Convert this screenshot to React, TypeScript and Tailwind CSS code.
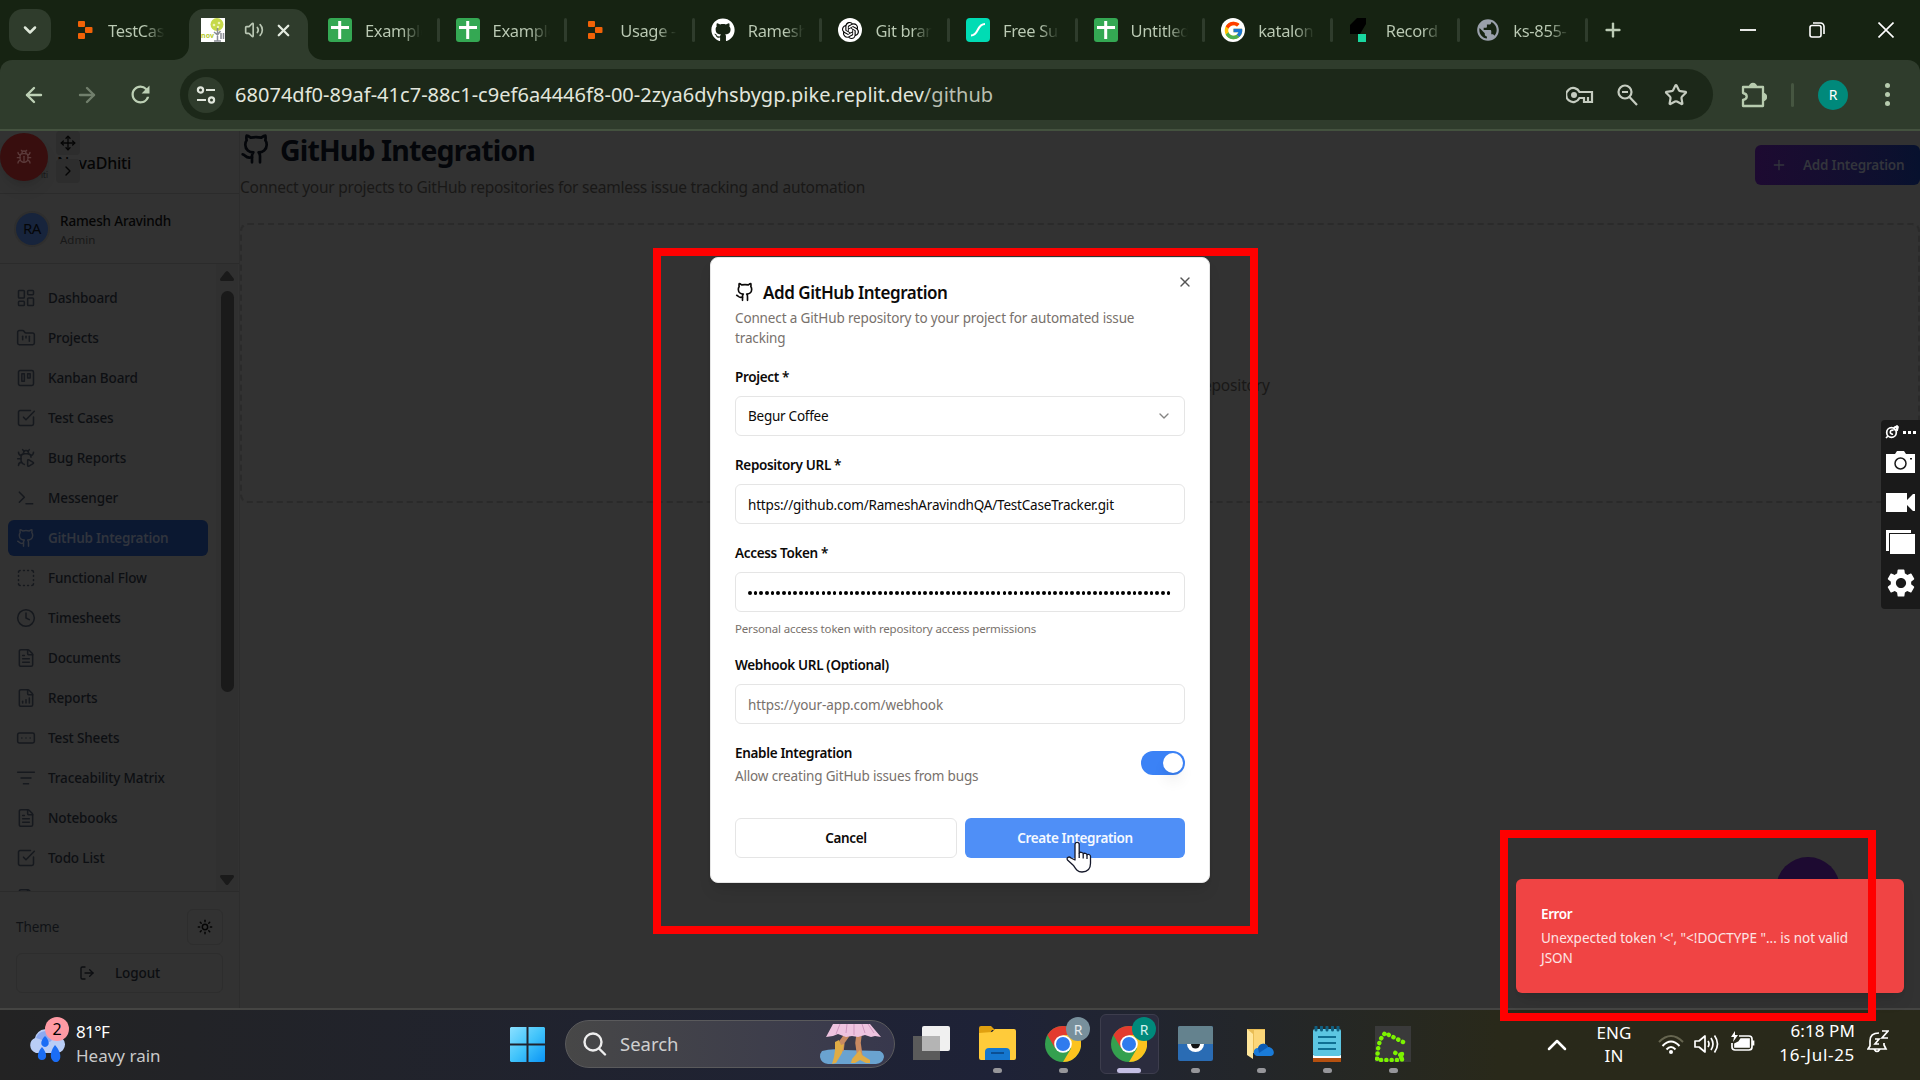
import React from "react";
import {
  ArrowLeft, ArrowRight, BugPlay, Bug, ChevronDown, ChevronRight, ChevronUp, Clock, FileText,
  FolderKanban, Github, LayoutDashboard, ListFilter, LogOut, Move, Plus, RectangleEllipsis, SquareCheckBig,
  SquareDashed, Star, Sun, Terminal, Trello, Volume2, X, FileChartColumnIncreasing,
} from "lucide-react";
import { FaGithub } from "react-icons/fa";
import { FcGoogle } from "react-icons/fc";
import { SiOpenai } from "react-icons/si";
import { MdRefresh, MdSettings, MdPublic } from "react-icons/md";

const ReplitIcon = () => (
  <svg viewBox="0 0 24 24" className="size-6 shrink-0" fill="#f26207">
    <rect x="5" y="3" width="7" height="6" rx="1" />
    <rect x="12" y="9" width="7.5" height="6" rx="1" />
    <rect x="5" y="15" width="7" height="6" rx="1" />
  </svg>
);
const SheetIcon = () => (
  <svg viewBox="0 0 24 24" className="size-6 shrink-0">
    <rect width="24" height="24" rx="3" fill="#34a853" />
    <path d="M11.7 3v18M3 9.500h18" stroke="#fff" strokeWidth="3" />
  </svg>
);
const GithubFav = () => <FaGithub className="size-6 shrink-0 text-white" />;
const GptFav = () => (
  <span className="flex size-6 shrink-0 items-center justify-center rounded-full bg-white">
    <SiOpenai className="size-[17px] text-black" />
  </span>
);
const FreeFav = () => (
  <svg viewBox="0 0 24 24" className="size-6 shrink-0">
    <rect width="24" height="24" rx="4" fill="#00dcb4" />
    <path d="M5 17.500c8 0 5.500-11.500 14-11.500" stroke="#fff" strokeWidth="2.200" fill="none" />
  </svg>
);
const GoogleFav = () => (
  <span className="flex size-6 shrink-0 items-center justify-center rounded-full bg-white">
    <FcGoogle className="size-[21px]" />
  </span>
);
const KatalonFav = () => (
  <svg viewBox="0 0 24 24" className="size-6 shrink-0">
    <path d="M8 0h9v6l-6 10H1V7z" fill="#000" />
    <path d="M9 16h8v8H9z" fill="#19d8a0" />
  </svg>
);
const GlobeFav = () => <MdPublic className="size-[26px] shrink-0 text-[#9aa0ab]" />;

const tabs = [
  { label: "Example", icon: SheetIcon },
  { label: "Example", icon: SheetIcon },
  { label: "Usage -", icon: ReplitIcon },
  { label: "Ramesh", icon: GithubFav },
  { label: "Git bran", icon: GptFav },
  { label: "Free Su", icon: FreeFav },
  { label: "Untitled", icon: SheetIcon },
  { label: "katalon", icon: GoogleFav },
  { label: "Record", icon: KatalonFav },
  { label: "ks-855-", icon: GlobeFav },
];

const TabLabel = ({ children }: { children: React.ReactNode }) => (
  <span className="mt-[2px] w-[57px] overflow-hidden bg-linear-to-r from-[#bccbb5] from-65% to-[#162312] bg-clip-text text-[16.500px] leading-6 tracking-[-0.35px] whitespace-nowrap text-transparent">
    {children}
  </span>
);

function TabStrip() {
  return (
    <div className="flex h-[60px] bg-[#162312]">
      <div className="mt-[9px] ml-[9px] flex size-[42px] shrink-0 items-center justify-center rounded-[14px] bg-[#2f3c2c]">
        <ChevronDown className="size-5 text-[#dfe8da]" strokeWidth={3} />
      </div>
      <div className="flex w-[138px] shrink-0 items-center gap-[11px] pl-[22px]">
        <ReplitIcon />
        <TabLabel>TestCase</TabLabel>
      </div>
      <div className="relative mt-[9px] flex w-[119px] shrink-0 items-center rounded-t-[15px] bg-[#2f3c2c] pb-[9px] pl-3">
        <svg className="absolute bottom-0 -left-[15px] size-[15px]" viewBox="0 0 15 15"><path d="M15 0v15H0A15 15 0 0 0 15 0" fill="#2f3c2c" /></svg>
        <svg className="absolute -right-[15px] bottom-0 size-[15px]" viewBox="0 0 15 15"><path d="M0 0v15h15A15 15 0 0 1 0 0" fill="#2f3c2c" /></svg>
        <svg viewBox="0 0 24 24" className="size-6">
          <rect width="24" height="24" fill="#fff" />
          <circle cx="16" cy="6.500" r="6.500" fill="#c6d94a" />
          <circle cx="13" cy="7" r="1.300" fill="#eef3b8" /><circle cx="18" cy="5" r="1.300" fill="#eef3b8" /><circle cx="17" cy="9" r="1.200" fill="#eef3b8" />
          <path d="M16.500 10v13M13 14l3.500 3 3-4M13 23h7M20 15v6M22.500 15v6" stroke="#8a8d95" strokeWidth="1.500" fill="none" />
          <text x="0" y="20" fontSize="7" fontWeight="700" fill="#b6cc2e" fontFamily="Noto Sans" textLength="13">nov</text>
        </svg>
        <Volume2 className="ml-[19px] size-5 text-[#b9c6b3]" strokeWidth={2} />
        <X className="ml-[10px] size-[19px] text-[#e4ece0]" strokeWidth={2.800} />
      </div>
      <div className="flex pl-1">
        {tabs.map(({ label, icon: Icon }, i) => (
          <div key={i} className="flex w-[127.600px] shrink-0 items-center pl-4">
            <span className="mr-[13px] flex w-6 justify-center"><Icon /></span>
            <TabLabel>{label}</TabLabel>
            <span className="ml-auto h-6 w-[3px] rounded bg-[#2f3c2c]" />
          </div>
        ))}
      </div>
      <div className="flex flex-1 items-center">
        <Plus className="ml-[14px] size-[22px] text-[#bccbb5]" strokeWidth={2.600} />
        <svg viewBox="0 0 16 16" className="ml-[116px] size-4" stroke="#fff" strokeWidth="1.800"><path d="M0 8h16" /></svg>
        <svg viewBox="0 0 16 16" className="ml-[53px] size-4 overflow-visible" stroke="#fff" strokeWidth="1.600" fill="none">
          <rect x="1" y="3.500" width="11" height="11.500" rx="2" /><path d="M4 1h7.500A3.500 3.500 0 0 1 15 4.500V12" />
        </svg>
        <svg viewBox="0 0 16 16" className="ml-[53px] size-4" stroke="#fff" strokeWidth="1.600"><path d="M.5.500l15 15M15.500.500l-15 15" /></svg>
      </div>
    </div>
  );
}

function Toolbar() {
  return (
    <div className="bg-[#162312]">
      <div className="flex h-[71px] items-center rounded-t-xl border-b-2 border-[#44523f] bg-[#2f3c2c]">
        <ArrowLeft className="ml-[22px] size-6 text-[#bdd0b5]" strokeWidth={2.400} />
        <ArrowRight className="ml-[29px] size-6 text-[#717f6c]" strokeWidth={2.400} />
        <MdRefresh className="ml-[28px] size-[27px] text-[#bdd0b5]" />
        <div className="ml-[26px] flex h-[51px] w-[1533px] items-center rounded-full bg-[#1c2819]">
          <span className="ml-2 flex size-9 items-center justify-center rounded-full bg-[#2f3c2c]">
            <svg viewBox="0 0 20 20" className="size-5" fill="none" stroke="#e0e6dc" strokeWidth="2.200">
              <circle cx="4.500" cy="5" r="2.600" /><path d="M10 5h9M1 15h9" /><circle cx="15.500" cy="15" r="2.600" />
            </svg>
          </span>
          <span className="ml-[11px] text-[20px] tracking-[0.030px] whitespace-nowrap text-[#e2e6dd]">
            68074df0-89af-41c7-88c1-c9ef6a4446f8-00-2zya6dyhsbygp.pike.replit.dev<span className="text-[#b9bfb1]">/github</span>
          </span>
          <div className="mr-[25px] ml-auto flex items-center">
            <svg viewBox="0 0 28 20" className="h-5 w-7" fill="none" stroke="#c5ccc0" strokeWidth="2.200">
              <path d="M13.500 7A7 7 0 1 0 13.500 13H18v4h8V7z" /><circle cx="8" cy="10" r="3" fill="#c5ccc0" stroke="none" /><path d="M22 12v5" />
            </svg>
            <svg viewBox="0 0 24 24" className="ml-[21px] size-6" fill="none" stroke="#c5ccc0" strokeWidth="2.200">
              <circle cx="10" cy="9" r="6.500" /><path d="M14.500 14l7.500 8M7 9h6" />
            </svg>
            <Star className="ml-[25px] size-6 text-[#c5ccc0]" strokeWidth={2.200} strokeLinejoin="miter" />
          </div>
        </div>
        <svg viewBox="0 0 26 26" className="ml-[28px] size-[26px]" fill="none" stroke="#b7cbae" strokeWidth="2.300">
          <path d="M2 5h20v19H2v-6c5-1 5-6 0-7z" strokeLinejoin="round" /><path d="M9 5a3 3 0 0 1 6 0M22 12a3 3 0 0 1 0 6" fill="#b7cbae" />
        </svg>
        <span className="ml-[24px] h-6 w-[3px] rounded bg-[#465641]" />
        <span className="ml-[24px] flex size-[30px] items-center justify-center rounded-full bg-[#00897b] text-[14px] text-white">R</span>
        <span className="ml-[37px] flex flex-col gap-1">
          {[0, 1, 2].map((i) => <span key={i} className="size-[5px] rounded-full bg-[#b7cbae]" />)}
        </span>
      </div>
    </div>
  );
}

const nav = [
  ["Dashboard", LayoutDashboard], ["Projects", FolderKanban], ["Kanban Board", Trello], ["Test Cases", SquareCheckBig],
  ["Bug Reports", BugPlay], ["Messenger", Terminal], ["GitHub Integration", Github], ["Functional Flow", SquareDashed],
  ["Timesheets", Clock], ["Documents", FileText], ["Reports", FileChartColumnIncreasing], ["Test Sheets", RectangleEllipsis],
  ["Traceability Matrix", ListFilter], ["Notebooks", FileText], ["Todo List", SquareCheckBig], ["", FileText],
] as const;

function Sidebar() {
  return (
    <aside className="flex w-60 shrink-0 flex-col border-r border-[#2d2d2d]">
      <div className="relative h-[63px] border-b border-[#2b2b2b]">
        <div className="flex h-full items-center pt-px pl-[57px] text-[16px] font-medium tracking-[-0.2px] text-[#050505]">NovaDhiti</div>
        <span className="absolute top-[38px] left-[41px] text-[8px] text-[#191919]">iti</span>
        <span className="absolute top-[2px] left-0 flex size-12 items-center justify-center rounded-full bg-[#380e0e] shadow-lg">
          <Bug className="size-4 text-[#5b3a3a]" />
        </span>
        <span className="absolute top-0 left-14 flex size-6 items-center justify-center rounded bg-[#2d2d2d]"><Move className="size-4 text-[#050505]" /></span>
        <span className="absolute top-7 left-14 flex size-6 items-center justify-center rounded bg-[#2d2d2d]"><ChevronRight className="size-4 text-[#050505]" /></span>
      </div>
      <div className="flex h-[70px] items-center gap-3 border-b border-[#2b2b2b] pl-4">
        <span className="flex size-8 items-center justify-center rounded-full bg-[#17243c] text-[15px] tracking-[-0.4px] text-[#050608] ring-2 ring-[#2e2e2e]">RA</span>
        <div className="pt-px">
          <div className="text-[13.500px] leading-5 font-medium tracking-[-0.150px] text-[#050505]">Ramesh Aravindh</div>
          <div className="text-[11.500px] leading-[17px] text-[#181818]">Admin</div>
        </div>
      </div>
      <div className="flex h-[628px] border-b border-[#2b2b2b]">
        <nav className="flex w-[216px] flex-col gap-1 overflow-hidden px-2 pt-4">
          {nav.map(([label, Icon], i) => (
            <div key={i} className={i === 6
              ? "flex h-9 shrink-0 items-center gap-3 rounded-md bg-[#0b1831] px-2 text-[13.500px] font-semibold tracking-[-0.26px] text-[#30343d]"
              : "flex h-9 shrink-0 items-center gap-3 px-2 text-[13.500px] font-medium tracking-[-0.130px] text-[#0d0f12]"}>
              <Icon className={i === 6 ? "size-5 text-[#30343d]" : "size-5 text-[#16191e]"} strokeWidth={1.800} />
              {label}
            </div>
          ))}
        </nav>
        <div className="flex w-[22px] flex-col items-center bg-[#303030] pt-[7px]">
          <svg viewBox="0 0 14 10" className="h-[10px] w-[14px]" fill="#1a1a1a"><path d="M7 0q1 0 2 1.500L14 8q0 2-1 2H1Q0 10 0 8l5-6.500Q6 0 7 0" /></svg>
          <div className="mt-[10px] h-[401px] w-[13px] rounded-full bg-[#1a1a1a]" />
          <svg viewBox="0 0 14 10" className="mt-auto mb-[6px] h-[10px] w-[14px] rotate-180" fill="#1a1a1a"><path d="M7 0q1 0 2 1.500L14 8q0 2-1 2H1Q0 10 0 8l5-6.500Q6 0 7 0" /></svg>
        </div>
      </div>
      <div className="flex flex-1 flex-col gap-2 pt-[17px] pr-4 pl-4">
        <div className="flex h-9 items-center justify-between">
          <span className="text-[13.500px] tracking-[-0.1px] text-[#101216]">Theme</span>
          <span className="flex size-9 items-center justify-center rounded-md border border-[#2d2d2d]"><Sun className="size-4 text-[#050505]" strokeWidth={2.200} /></span>
        </div>
        <div className="flex h-10 items-center rounded-md border border-[#2d2d2d] pl-[62px] text-[13.500px] font-medium tracking-[-0.1px] text-[#0c0e11]">
          <LogOut className="mr-[20px] size-4" />Logout
        </div>
      </div>
    </aside>
  );
}

function Main() {
  return (
    <main className="flex-1">
      <div className="flex h-[92px] justify-between">
        <div>
          <h1 className="flex h-[38px] items-center gap-2 text-[28.500px] font-bold tracking-[-0.88px] text-[#04060a]">
            <Github className="-mt-0.5 size-8" />GitHub Integration
          </h1>
          <p className="mt-[6px] text-[15.500px] leading-6 tracking-[-0.245px] text-[#191817]">Connect your projects to GitHub repositories for seamless issue tracking and automation</p>
        </div>
        <div className="mt-[14px] flex h-10 w-[165px] items-center rounded-md bg-linear-to-r from-[#1d0a31] to-[#07112e] pl-4 text-[13.500px] font-semibold tracking-[-0.22px] text-[#33353c]">
          <Plus className="mr-4 size-4" />Add Integration
        </div>
      </div>
      <div className="flex h-[280px] items-center rounded-lg border-2 border-dashed border-[#2a2a2a] pt-[45px] pl-[955px] text-[15.500px] tracking-[-0.17px] text-[#191817]">
        repository
      </div>
    </main>
  );
}

const Label = ({ children }: { children: React.ReactNode }) => (
  <span className="flex h-6 items-center text-[13.500px] font-semibold tracking-[-0.33px] text-[#0c0a09]">{children}</span>
);
const Field = ({ label, children, hint }: { label: string; children: React.ReactNode; hint?: string }) => (
  <div className="flex flex-col gap-[7px]">
    <Label>{label}</Label>
    <div className="flex h-10 items-center overflow-hidden rounded-md border border-[#e5e5e5] px-3 text-[13.500px] tracking-[-0.25px] whitespace-nowrap">{children}</div>
    {hint && <span className="h-[17px] text-[11.500px] leading-5 tracking-[-0.16px] text-[#78716c]">{hint}</span>}
  </div>
);

function Dialog() {
  return (
    <div className="absolute top-[257px] left-[710px] h-[626px] w-[500px] rounded-lg border border-[#e5e5e5] bg-white p-6 text-[#0c0a09] shadow-lg">
      <X className="absolute top-4 right-4 size-4 text-[#555]" />
      <h2 className="flex h-[22px] items-center gap-2 text-[17px] font-semibold tracking-[-0.46px]"><Github className="-mt-0.5 size-5" />Add GitHub Integration</h2>
      <p className="mt-[4px] w-[430px] text-[13.500px] leading-5 tracking-[-0.14px] text-[#78716c]">Connect a GitHub repository to your project for automated issue<br />tracking</p>
      <div className="mt-[17px] flex flex-col gap-[17px]">
        <Field label="Project *">Begur Coffee<ChevronDown className="ml-auto size-4 text-[#858483]" /></Field>
        <Field label="Repository URL *"><span className="pt-[2px] tracking-[-0.190px]">https://github.com/RameshAravindhQA/TestCaseTracker.git</span></Field>
        <Field label="Access Token *" hint="Personal access token with repository access permissions">
          <span className="mt-[2px] flex w-[424px] gap-[2.070px] overflow-hidden">
            {Array.from({ length: 76 }, (_, i) => <span key={i} className="size-[3.600px] shrink-0 rounded-full bg-black" />)}
          </span>
        </Field>
        <Field label="Webhook URL (Optional)"><span className="pt-[2px] tracking-[-0.12px] text-[#78716c]">https://your-app.com/webhook</span></Field>
        <div className="flex items-center justify-between">
          <div>
            <Label>Enable Integration</Label>
            <p className="h-[21px] text-[13.500px] leading-[22px] tracking-[-0.160px] text-[#78716c]">Allow creating GitHub issues from bugs</p>
          </div>
          <span className="-mt-px flex h-6 w-11 items-center justify-end rounded-full bg-[#3b82f6] p-0.5"><span className="size-5 rounded-full bg-white shadow-lg" /></span>
        </div>
      </div>
      <div className="mt-8 flex gap-2 text-[13.500px]">
        <div className="flex h-10 w-[222px] items-center justify-center rounded-md border border-[#e5e5e5] font-semibold tracking-[-0.35px]">Cancel</div>
        <div className="flex h-10 w-[220px] items-center justify-center rounded-md bg-[#4f8ff7] font-semibold tracking-[-0.37px] text-[#f5f9ff]">Create Integration</div>
      </div>
      <svg viewBox="0 0 26 32" className="absolute top-[583px] left-[355px] h-8 w-[26px]" fill="#fff" stroke="#15182a" strokeWidth="1.300" strokeLinejoin="round">
        <path d="M9 19V3.500a2 2 0 0 1 4.200 0V12c.5-1.200 3.800-1 4 .8.800-1 3.600-.6 3.800 1 .8-.8 3.500-.5 3.500 1.500v7c0 5-2 8.700-8.500 8.700-4.500 0-6-2.500-8.500-6.500L1.500 19C.2 16.500 3 15 5 17z" />
        <path d="M13.200 12v5M17.200 13v4.500M21 14v4" fill="none" />
      </svg>
    </div>
  );
}

function Toast() {
  return (
    <>
      <div className="absolute top-[857px] left-[1776px] size-16 rounded-full bg-[#1d0a31]" />
      <div className="absolute top-[879px] left-[1516px] h-[114px] w-[388px] rounded-md bg-[#f04444] pt-[25px] pl-[25px] text-[13.500px] leading-5 text-[#fde5e5] shadow-lg">
        <div className="font-semibold tracking-[-0.4px] text-white">Error</div>
        <div className="mt-1 tracking-[-0.020px]">Unexpected token '&lt;', "&lt;!DOCTYPE "... is not valid<br />JSON</div>
      </div>
      <div className="absolute top-[830px] left-[1500px] h-[191px] w-[376px] border-8 border-[#ff0000]" />
    </>
  );
}

function CaptureBar() {
  return (
    <div className="absolute top-[420px] right-0 flex h-[189px] w-[39px] flex-col items-center rounded-l bg-[#1a1a1a] text-white">
      <div className="mt-[5px] flex items-center gap-1">
        <svg viewBox="0 0 14 14" className="size-[14px]" fill="none" stroke="#fff" strokeWidth="1.700">
          <circle cx="6.500" cy="7.500" r="4.800" /><path d="M8.500 5.500A2 2 0 1 0 8 9M1 13l2-2M9 3l3-2 1 1-1 4" /><circle cx="10.500" cy="3.500" r="1.500" />
        </svg>
        <span className="flex gap-[2px]">{[0, 1, 2].map((i) => <span key={i} className="h-[3px] w-[3px] bg-white" />)}</span>
      </div>
      <svg viewBox="0 0 29 22" className="mt-[12px] h-[22px] w-[29px]"><path d="M0 3h9l2-3h7l2 3h9v19H0z" fill="#fff" /><circle cx="14.500" cy="12.500" r="5.500" fill="none" stroke="#1a1a1a" strokeWidth="1.500" /><rect x="24" y="7" width="2" height="1.500" fill="#1a1a1a" /></svg>
      <svg viewBox="0 0 29 19" className="mt-[20px] h-[19px] w-[29px]" fill="#fff"><path d="M0 0h21v7l6-6h2v17h-2l-6-6v7H0z" /></svg>
      <svg viewBox="0 0 29 24" className="mt-[18px] h-[24px] w-[29px]" fill="#fff"><path d="M0 0h25v3H3v18H0z" /><path d="M4 4h25v20H4z" /></svg>
      <MdSettings className="mt-[12px] size-[34px]" />
    </div>
  );
}

const ChromeIcon = ({ badge }: { badge: string }) => (
  <span className="relative flex">
    <svg viewBox="0 0 36 36" className="size-9">
      <circle cx="18" cy="18" r="18" fill="#34a04f" />
      <path d="M18 9h15.600A18 18 0 0 1 18 36l8-13.500z" fill="#fcc31e" />
      <path d="M2.400 9L10 22l8-13h15.600A18 18 0 0 0 2.400 9" fill="#e33b2e" />
      <circle cx="18" cy="18" r="8.800" fill="#fff" /><circle cx="18" cy="18" r="7" fill="#2f7bee" />
    </svg>
    <span className={badge}>R</span>
  </span>
);

const apps = [
  <svg viewBox="0 0 37 35" className="h-[35px] w-[37px]">
    <path d="M0 10h27v24H0z" fill="#5b5b5b" /><rect x="9" y="0" width="28" height="25" rx="2" fill="#f0f0f0" /><path d="M9 10h18v15H9z" fill="#b4b4b4" />
  </svg>,
  <svg viewBox="0 0 37 34" className="h-[34px] w-[37px]">
    <path d="M0 2q0-2 2-2h10l4 4h-3l-3 5H0z" fill="#e0a010" /><path d="M0 7l13-1 3-3h19q2 0 2 2v27q0 2-2 2H2q-2 0-2-2z" fill="#ffcb3a" />
    <path d="M6 34V26q0-4 4-4h17q4 0 4 4v8z" fill="#1577cf" /><path d="M12 27h13" stroke="#0b4f94" strokeWidth="2" />
  </svg>,
  <ChromeIcon badge="absolute -top-[9px] left-[21px] flex size-6 items-center justify-center rounded-full bg-[#78909c] text-[14px] text-[#e5eaec]" />,
  <ChromeIcon badge="absolute -top-[9px] left-[21px] flex size-6 items-center justify-center rounded-full bg-[#00897b] text-[14px] text-[#d5f2ee]" />,
  <svg viewBox="0 0 35 35" className="size-[35px]">
    <rect width="35" height="35" rx="2" fill="#2a6cb4" /><path d="M0 2q0-2 2-2h31q2 0 2 2v16H0z" fill="#64828e" />
    <path d="M9 18a8.500 8 0 0 0 17 0z" fill="#fff" /><path d="M13 18a4.500 4.500 0 0 0 9 0z" fill="#111" />
  </svg>,
  <svg viewBox="0 0 30 32" className="mt-[2px] h-8 w-[30px]">
    <path d="M1 1h18v24H1z" fill="#e9bd55" /><path d="M1 1l6 5v25l-6-4z" fill="#ffe69b" /><path d="M8 2h11v22H8z" fill="#fbd678" />
    <path d="M11 28c-5-1-4-8 1-8 2-6 9-5 10-1 6 0 8 8 3 9z" fill="#1a7bd8" /><path d="M12 20c2-6 9-5 10-1l-9 6z" fill="#0b5bb5" />
  </svg>,
  <svg viewBox="0 0 30 36" className="h-9 w-[30px]">
    <path d="M1 30h28v6H1z" fill="#b5500f" /><path d="M1 29h28v3H1z" fill="#fff" /><rect x="1" y="3" width="28" height="27" rx="2" fill="#5cc6e2" />
    <path d="M4 1v3M9.500 1v3M15 1v3M20.500 1v3M26 1v3" stroke="#105f80" strokeWidth="3" strokeLinecap="round" /><path d="M6 11h18M6 17h18M6 23h18" stroke="#0f6f93" strokeWidth="2" />
  </svg>,
  <svg viewBox="0 0 36 36" className="size-9">
    <rect width="36" height="36" fill="#3a3a3a" />
    <path d="M28 16L10 7 5 14 3 23 2 34h22l4-4-10-4M27 28v7" stroke="#7cf400" strokeWidth="4.500" strokeDasharray=".1 5.200" strokeLinecap="round" fill="none" />
  </svg>,
];

function Taskbar() {
  return (
    <div className="flex h-[72px] items-start border-t-2 border-[#454543] bg-linear-to-r from-[#232323] via-[#1e2237] via-52% to-[#29291a] to-78% text-white">
      <div className="mt-[7px] flex w-[510px] pl-[28px]">
        <span className="relative mt-[12px]">
          <svg viewBox="0 0 38 34" className="h-[34px] w-[38px]">
            <path d="M8 24a8 8 0 0 1-1-15 11 11 0 0 1 21-2 8.500 8.500 0 0 1 1 17z" fill="#b9cdf6" /><path d="M8 9a11 10 0 0 1 20-2l-6 6-8-2z" fill="#8daaf0" />
            <path d="M17 7c5 5 5 10 0 11-5-1-5-6 0-11M14 18c6 7 5 13 0 13s-6-6 0-13M27 16c8 9 6 17 1 17s-8-8-1-17" fill="#1a6df5" />
          </svg>
          <span className="absolute -top-[12px] left-[17px] flex size-6 items-center justify-center rounded-full bg-[#ff9aa4] text-[16px] text-black">2</span>
        </span>
        <div className="ml-[10px] text-[17px] leading-6"><div className="mt-[3px] tracking-[-0.6px]">81°F</div><div className="tracking-[0px] text-[#c9c9c9]">Heavy rain</div></div>
      </div>
      <svg viewBox="0 0 35 35" className="mt-[17px] size-[35px]">
        <defs><linearGradient id="win" x1="0" y1="0" x2="1" y2="1"><stop stopColor="#8be0ff" /><stop offset=".5" stopColor="#42c4fb" /><stop offset="1" stopColor="#0a94f5" /></linearGradient></defs>
        <path d="M1 0h15.500v16.500H0V1zM18.500 0H34l1 1v15.500H18.500zM0 18.500h16.500V35H1l-1-1zM18.500 18.500H35V34l-1 1H18.500z" fill="url(#win)" />
      </svg>
      <div className="mt-[10px] ml-5 flex h-12 w-[330px] items-center rounded-full border border-[#5a5a5c] bg-linear-to-r from-[#474747] to-[#38384d]">
        <svg viewBox="0 0 24 24" className="ml-[17px] size-6" fill="none" stroke="#eee" strokeWidth="2.400"><circle cx="10" cy="10" r="8.500" /><path d="M16 16.500l6 6" strokeLinecap="round" /></svg>
        <span className="ml-[13px] text-[18.500px] tracking-[0px] text-[#cfcfcf]">Search</span>
        <svg viewBox="0 0 64 40" className="mr-[10px] ml-auto h-10 w-16">
          <path d="M2 27q10-3 22-1l36 1q4 2 4 6-1 6-8 7H8q-7-1-8-7 0-4 2-6" fill="#6aa3d0" />
          <path d="M27 11l-5 7-1 9M39 11l-1 8 2 14" stroke="#c98a62" strokeWidth="5.500" fill="none" />
          <path d="M13 0h37l5 6 6 7-6-1-4 1-6-2-7 2-6-1-6 1-8-3-5 2-7 1z" fill="#eec3df" />
          <path d="M20 0l-4 10M27 0l-1 9M34 0v11M42 0l3 9M48 0l6 9" stroke="#cf98bf" fill="none" />
          <path d="M15 18l4-2 2 5 3-1-2 9-6 10-4 1 2-7 1-7zM32 35l5-6 3-3 2 5 8 5v3h-4l-6-3-5 3h-4z" fill="#e0ac45" />
        </svg>
      </div>
      <div className="mt-1 ml-[3px] flex">
        {apps.map((icon, i) => (
          <div key={i} className="flex w-[66px] justify-center">
            <div className={i === 3
              ? "relative flex h-[60px] w-[59px] justify-center rounded-md border border-[#3d3d4d] bg-[#2b2c3e] pt-[11px]"
              : "relative flex h-[60px] w-[59px] justify-center pt-[12px]"}>
              {icon}
              {i > 0 && <span className={i === 3 ? "absolute bottom-0 h-[5px] w-6 rounded-full bg-[#c4bfe4]" : "absolute bottom-px h-[5px] w-[9px] rounded-full bg-[#96969a]"} />}
            </div>
          </div>
        ))}
      </div>
      <div className="mt-[11px] ml-[118px] flex text-[17px] leading-6">
        <ChevronUp className="mt-[8px] -ml-[3px] size-8" strokeWidth={1.900} />
        <div className="ml-[19px] w-[44px] text-center leading-[23px] tracking-[0.1px]">ENG<br />IN</div>
        <svg viewBox="0 0 26 20" className="mt-[13px] ml-[22px] h-5 w-[26px]" fill="none" strokeWidth="2">
          <path d="M1 8Q13-4 25 8" stroke="#666550" /><path d="M4.500 12q8.500-9 17 0M8.500 15.500q4.500-5 9 0" stroke="#fff" /><circle cx="13" cy="18" r="2" fill="#fff" />
        </svg>
        <svg viewBox="0 0 26 22" className="mt-[12px] ml-[10px] h-[22px] w-[26px]" fill="none" stroke="#fff" strokeWidth="1.700">
          <path d="M1 8h4l6-5v16l-6-5H1zM14 8q2 3 0 6M17 5q4 6 0 12M20.500 2.500q6 8.500 0 17" strokeLinejoin="round" />
        </svg>
        <svg viewBox="0 0 26 22" className="mt-[10px] ml-[10px] h-[22px] w-[26px]" fill="none" stroke="#fff" strokeWidth="1.700">
          <path d="M9 5h10q3 0 3 3v8q0 3-3 3H5q-3 0-3-3v-4M23.500 9.500v5" /><path d="M11 8h8v8H5v-3l4-2z" fill="#fff" /><path d="M5 0L1 6h3l-1 5 5-7H5z" fill="#fff" stroke="none" />
        </svg>
        <div className="-mt-[2px] ml-[17px] w-[82px] text-right whitespace-nowrap"><div className="tracking-[0.1px]">6:18 PM</div><div className="tracking-[0.700px]">16-Jul-25</div></div>
        <svg viewBox="0 0 22 24" className="mt-[9px] ml-[12px] h-6 w-[22px]" fill="none" stroke="#fff" strokeWidth="1.700">
          <path d="M12 3Q3 3 3 11v5l-2 3h18l-2-4v-2M7 19q3 5 6 0" /><path d="M15 1h6l-6 7h6M8 9h4l-4 5h4" />
        </svg>
      </div>
    </div>
  );
}

export default function App() {
  return (
    <div className="relative flex h-[1080px] w-[1920px] flex-col overflow-hidden bg-[#323232] font-['Noto_Sans',sans-serif]">
      <TabStrip />
      <Toolbar />
      <div className="flex h-[877px]">
        <Sidebar />
        <Main />
      </div>
      <Taskbar />
      <Dialog />
      <div className="absolute top-[248px] left-[653px] h-[686px] w-[605px] border-8 border-[#ff0000]" />
      <Toast />
      <CaptureBar />
    </div>
  );
}
